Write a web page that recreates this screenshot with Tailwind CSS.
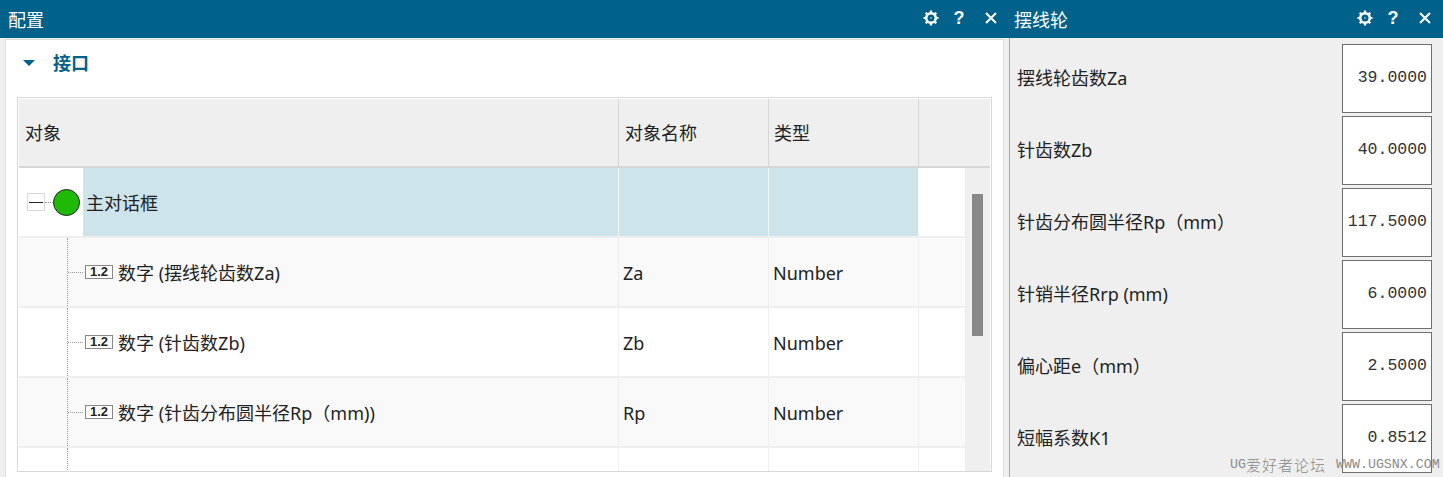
<!DOCTYPE html>
<html lang="zh-CN">
<head>
    <meta charset="UTF-8">
    <title>配置</title>
    <script src="https://cdn.jsdelivr.net/npm/@tailwindcss/browser@4"></script>
</head>
<body class="relative w-[1443px] h-[477px] overflow-hidden bg-[#efefef] text-[18px] text-[#222] font-['Noto_Sans','Noto_Sans_CJK_SC',sans-serif]">
    <div class="flex h-full">
        <!-- 配置 -->
        <div class="w-[1009px] flex flex-col">
            <div class="h-[38px] shrink-0 bg-[#00618a] text-white flex items-center pl-2">
                <span class="flex-1 mt-[3px]">配置</span>
                <svg class="w-[16px] h-[16px] mr-[14px] mb-[3px]" viewBox="0 0 16 16" fill="none" stroke="#fff"><circle cx="8" cy="8" r="4.8" stroke-width="2.6"/><path d="M8 0.5V3M8 13V15.5M0.5 8H3M13 8H15.5M2.7 2.7L4.4 4.4M11.6 11.6L13.3 13.3M13.3 2.7L11.6 4.4M4.4 11.6L2.7 13.3" stroke-width="2.2"/><circle cx="8" cy="8" r="0.7" fill="#fff" stroke="none"/></svg>
                <span class="w-[12px] mr-[20px] mb-[2px] font-['Liberation_Sans'] font-bold text-[18px] leading-none text-center">?</span>
                <svg class="w-[12px] h-[12px] mr-[12px] mb-[3px]" viewBox="0 0 12 12" fill="none" stroke="#fff" stroke-width="2"><path d="M1 1L11 11M11 1L1 11"/></svg>
            </div>
            <div class="flex-1 min-h-0 pl-[5px] pr-[5px] pt-px">
                <div class="h-full bg-white border border-b-0 border-[#dcdcdc] pl-[11px] pr-[11px]">
                    <div class="h-[46px] flex items-center">
                        <svg class="w-[12px] h-[6px] ml-[6px] mr-[18px]" viewBox="0 0 12 6"><path d="M0 0H12L6 6Z" fill="#00618a"/></svg>
                        <span class="font-semibold text-[#00618a]">接口</span>
                    </div>
                    <div class="mt-[11px] h-[375px] border border-[#d8d8d8] p-px overflow-hidden">
                        <div class="h-[69px] bg-[#efefef] border-b-2 border-[#d6d6d6] grid grid-cols-[600px_150px_150px_1fr]">
                            <div class="border-r border-[#d6d6d6] flex items-center pl-[6px] pt-[2px]">对象</div>
                            <div class="border-r border-[#d6d6d6] flex items-center pl-[6px] pt-[2px]">对象名称</div>
                            <div class="border-r border-[#d6d6d6] flex items-center pl-[5px] pt-[2px]">类型</div>
                            <div></div>
                        </div>
                        <div class="flex h-[303px]">
                            <div class="w-[946px] overflow-hidden">
                                <div class="h-[70px] flex border-b-2 border-[#efefef]">
                                    <div class="w-[64px] flex items-center pl-[8px]">
                                        <span class="w-[18px] h-[18px] border border-[#d8d8d8] flex items-center justify-center bg-white"><span class="w-[14px] h-px bg-[#222]"></span></span>
                                        <span class="w-[8px] border-t border-dotted border-[#999]"></span>
                                        <span class="w-[27px] h-[27px] rounded-full bg-[#1fba05] border border-[#222]"></span>
                                    </div>
                                    <div class="w-[836px] bg-[#cce4ea] grid grid-cols-[536px_150px_150px]">
                                        <div class="border-r border-[#f2f7f8] flex items-center pl-[3px] pt-[2px]">主对话框</div>
                                        <div class="border-r border-[#f2f7f8]"></div>
                                        <div class="border-r border-[#f2f7f8]"></div>
                                    </div>
                                </div>
                                <div class="h-[70px] bg-[#f9f9f9] border-b-2 border-[#efefef] grid grid-cols-[600px_150px_150px_1fr]">
                                    <div class="border-r border-[#efefef] flex items-center pl-[48px]">
                                        <span class="self-stretch w-px border-l border-dotted border-[#999]"></span>
                                        <span class="w-[15px] border-t border-dotted border-[#999] mr-[2px]"></span>
                                        <span class="w-[28px] h-[14px] border border-[#888] bg-white font-['Liberation_Sans'] font-bold text-[13px] leading-[12px] text-center mr-[5px]">1.2</span>
                                        <span class="mt-[2px]">数字 (摆线轮齿数Za)</span>
                                    </div>
                                    <div class="border-r border-[#efefef] flex items-center pl-[4px] pt-[2px]">Za</div>
                                    <div class="border-r border-[#efefef] flex items-center pl-[4px] pt-[2px]">Number</div>
                                    <div></div>
                                </div>
                                <div class="h-[70px] bg-white border-b-2 border-[#efefef] grid grid-cols-[600px_150px_150px_1fr]">
                                    <div class="border-r border-[#efefef] flex items-center pl-[48px]">
                                        <span class="self-stretch w-px border-l border-dotted border-[#999]"></span>
                                        <span class="w-[15px] border-t border-dotted border-[#999] mr-[2px]"></span>
                                        <span class="w-[28px] h-[14px] border border-[#888] bg-white font-['Liberation_Sans'] font-bold text-[13px] leading-[12px] text-center mr-[5px]">1.2</span>
                                        <span class="mt-[2px]">数字 (针齿数Zb)</span>
                                    </div>
                                    <div class="border-r border-[#efefef] flex items-center pl-[4px] pt-[2px]">Zb</div>
                                    <div class="border-r border-[#efefef] flex items-center pl-[4px] pt-[2px]">Number</div>
                                    <div></div>
                                </div>
                                <div class="h-[70px] bg-[#f9f9f9] border-b-2 border-[#efefef] grid grid-cols-[600px_150px_150px_1fr]">
                                    <div class="border-r border-[#efefef] flex items-center pl-[48px]">
                                        <span class="self-stretch w-px border-l border-dotted border-[#999]"></span>
                                        <span class="w-[15px] border-t border-dotted border-[#999] mr-[2px]"></span>
                                        <span class="w-[28px] h-[14px] border border-[#888] bg-white font-['Liberation_Sans'] font-bold text-[13px] leading-[12px] text-center mr-[5px]">1.2</span>
                                        <span class="mt-[2px]">数字 (针齿分布圆半径Rp（mm))</span>
                                    </div>
                                    <div class="border-r border-[#efefef] flex items-center pl-[4px] pt-[2px]">Rp</div>
                                    <div class="border-r border-[#efefef] flex items-center pl-[4px] pt-[2px]">Number</div>
                                    <div></div>
                                </div>
                                <div class="h-[24px] bg-white grid grid-cols-[600px_150px_150px_1fr]">
                                    <div class="border-r border-[#efefef] pl-[48px]"><span class="block h-full w-px border-l border-dotted border-[#999]"></span></div>
                                    <div class="border-r border-[#efefef]"></div>
                                    <div class="border-r border-[#efefef]"></div>
                                    <div></div>
                                </div>
                            </div>
                            <!-- scrollbar -->
                            <div class="flex-1 bg-[#efefef] pt-[26px] pl-[7px]">
                                <div class="w-[11px] h-[142px] bg-[#888]"></div>
                            </div>
                        </div>
                    </div>
                </div>
            </div>
        </div>
        <!-- 摆线轮 -->
        <div class="flex-1 flex flex-col">
            <div class="h-[38px] shrink-0 bg-[#00618a] text-white flex items-center pl-[5px]">
                <span class="flex-1 mt-[3px]">摆线轮</span>
                <svg class="w-[16px] h-[16px] mr-[14px] mb-[3px]" viewBox="0 0 16 16" fill="none" stroke="#fff"><circle cx="8" cy="8" r="4.8" stroke-width="2.6"/><path d="M8 0.5V3M8 13V15.5M0.5 8H3M13 8H15.5M2.7 2.7L4.4 4.4M11.6 11.6L13.3 13.3M13.3 2.7L11.6 4.4M4.4 11.6L2.7 13.3" stroke-width="2.2"/><circle cx="8" cy="8" r="0.7" fill="#fff" stroke="none"/></svg>
                <span class="w-[12px] mr-[20px] mb-[2px] font-['Liberation_Sans'] font-bold text-[18px] leading-none text-center">?</span>
                <svg class="w-[12px] h-[12px] mr-[12px] mb-[3px]" viewBox="0 0 12 12" fill="none" stroke="#fff" stroke-width="2"><path d="M1 1L11 11M11 1L1 11"/></svg>
            </div>
            <div class="flex-1 border-l border-[#a8a8a8] pl-[7px] pr-[11px] pt-[6px] flex flex-col gap-[3px]">
                <div class="h-[69px] shrink-0 flex items-center justify-between">
                    <span>摆线轮齿数Za</span>
                    <span class="w-[90px] h-full border border-[#6f6f6f] bg-white flex items-center justify-end pr-[4px] font-['Liberation_Mono'] text-[16.5px] text-[#333]">39.0000</span>
                </div>
                <div class="h-[69px] shrink-0 flex items-center justify-between">
                    <span>针齿数Zb</span>
                    <span class="w-[90px] h-full border border-[#6f6f6f] bg-white flex items-center justify-end pr-[4px] font-['Liberation_Mono'] text-[16.5px] text-[#333]">40.0000</span>
                </div>
                <div class="h-[69px] shrink-0 flex items-center justify-between">
                    <span>针齿分布圆半径Rp（mm）</span>
                    <span class="w-[90px] h-full border border-[#6f6f6f] bg-white flex items-center justify-end pr-[4px] font-['Liberation_Mono'] text-[16.5px] text-[#333]">117.5000</span>
                </div>
                <div class="h-[69px] shrink-0 flex items-center justify-between">
                    <span>针销半径Rrp (mm)</span>
                    <span class="w-[90px] h-full border border-[#6f6f6f] bg-white flex items-center justify-end pr-[4px] font-['Liberation_Mono'] text-[16.5px] text-[#333]">6.0000</span>
                </div>
                <div class="h-[69px] shrink-0 flex items-center justify-between">
                    <span>偏心距e（mm）</span>
                    <span class="w-[90px] h-full border border-[#6f6f6f] bg-white flex items-center justify-end pr-[4px] font-['Liberation_Mono'] text-[16.5px] text-[#333]">2.5000</span>
                </div>
                <div class="h-[69px] shrink-0 flex items-center justify-between">
                    <span>短幅系数K1</span>
                    <span class="w-[90px] h-full border border-[#6f6f6f] bg-white flex items-center justify-end pr-[4px] font-['Liberation_Mono'] text-[16.5px] text-[#333]">0.8512</span>
                </div>
            </div>
        </div>
    </div>
    <!-- watermark -->
    <div class="absolute left-[1230px] top-[456px] whitespace-nowrap flex items-center gap-[10px] text-[13.3px] leading-[18px] text-[#8a8a8a] font-['Liberation_Mono',monospace]">
        <span class="flex items-center">UG<span class="text-[15px] tracking-[1px] font-['Noto_Sans_CJK_SC',sans-serif] font-light">爱好者论坛</span></span>
        <span>WWW.UGSNX.COM</span>
    </div>
</body>
</html>
